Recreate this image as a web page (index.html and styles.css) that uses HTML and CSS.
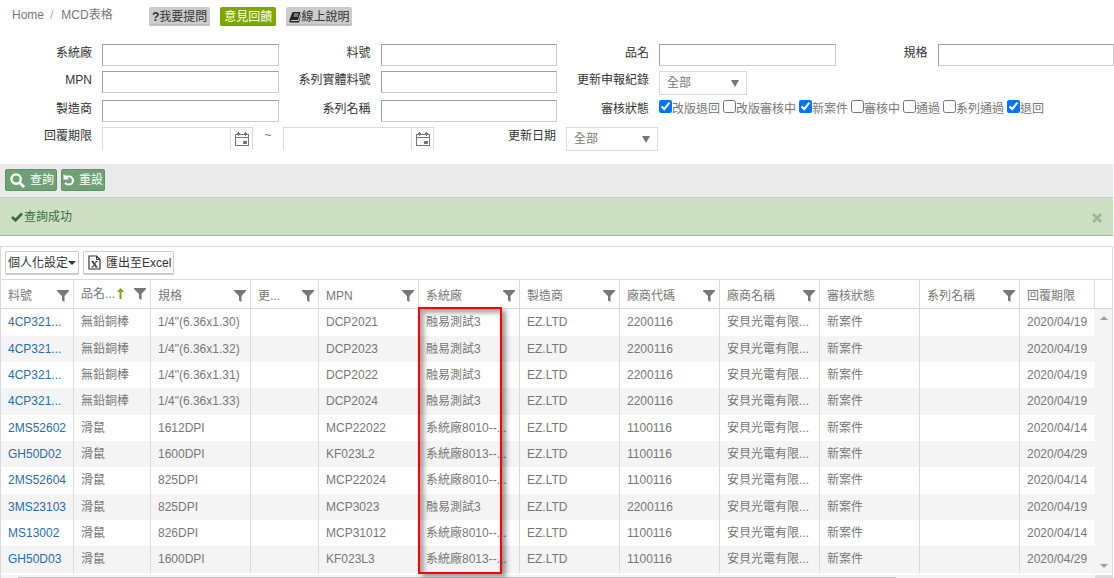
FILE: index.html
```html
<!DOCTYPE html>
<html lang="zh-Hant">
<head>
<meta charset="utf-8">
<title>MCD表格</title>
<link rel="stylesheet" href="styles.css">
</head>
<body>
<svg class="sprite" aria-hidden="true">
  <symbol id="funnel" viewBox="0 0 12 12"><path d="M0 0h12v1L7.500 6v6L5 10.500V6L0 1z"/></symbol>
  <symbol id="calendar" viewBox="0 0 14 14"><path d="M0 2h14v12H0zM1 6v7h12V6zM1 3v2h12V3z" fill-rule="evenodd"/><path d="M3 0h1v4H3zM10 0h1v4h-1zM2 1h3v1H2zM9 1h3v1H9zM8 9h4v3H8z"/></symbol>
  <symbol id="caret" viewBox="0 0 8 7"><path d="M0 0h8L4 7z"/></symbol>
</svg>

<header class="top">
  <nav class="crumbs"><a href="#">Home</a><span class="slash">/</span><span>MCD表格</span></nav>
  <button class="tag" type="button"><b>?</b>我要提問</button>
  <button class="tag tag-green" type="button">意見回饋</button>
  <button class="tag" type="button"><svg class="book" viewBox="0 0 12 12"><path d="M4 1h7.500L9 9H2.200c-.8 0-.8 1 0 1H9.500L12 3v1l-2 7.500H1.500C.3 11.500 0 10 .5 9L3 2z"/><path d="M5 3h4.500M4.500 5H9" stroke="#ccc"/></svg>線上說明</button>
</header>

<form class="search">
  <div class="fields">
    <div class="field"><label for="f1">系統廠</label><input class="text" id="f1" type="text"></div>
    <div class="field"><label for="f2">料號</label><input class="text" id="f2" type="text"></div>
    <div class="field"><label for="f3">品名</label><input class="text" id="f3" type="text"></div>
    <div class="field"><label for="f4">規格</label><input class="text" id="f4" type="text"></div>
    <div class="field"><label for="f5">MPN</label><input class="text" id="f5" type="text"></div>
    <div class="field"><label for="f6">系列實體料號</label><input class="text" id="f6" type="text"></div>
    <div class="field wide"><label for="f7">更新申報紀錄</label><span class="drop"><select id="f7"><option>全部</option></select><svg class="caret"><use href="#caret"/></svg></span></div>
    <div class="field"><label for="f8">製造商</label><input class="text" id="f8" type="text"></div>
    <div class="field"><label for="f9">系列名稱</label><input class="text" id="f9" type="text"></div>
    <div class="field wide" role="group" aria-labelledby="state"><span class="caption" id="state">審核狀態</span>
      <div class="checks">
        <label><input type="checkbox" checked>改版退回</label><label><input type="checkbox">改版審核中</label><label><input type="checkbox" checked>新案件</label><label><input type="checkbox">審核中</label><label><input type="checkbox">通過</label><label><input type="checkbox">系列通過</label><label><input type="checkbox" checked>退回</label>
      </div>
    </div>
  </div>
  <div class="dates">
    <label class="caption" for="d1">回覆期限</label>
    <span class="date"><input id="d1" type="text"><button type="button" aria-label="選擇開始日期"><svg><use href="#calendar"/></svg></button></span>
    <span class="tilde">~</span>
    <span class="date"><input type="text" aria-label="結束日期"><button type="button" aria-label="選擇結束日期"><svg><use href="#calendar"/></svg></button></span>
    <label class="caption updated" for="d3">更新日期</label>
    <span class="drop drop-date"><select id="d3"><option>全部</option></select><svg class="caret"><use href="#caret"/></svg></span>
  </div>
</form>

<div class="actions">
  <button class="act" type="button"><svg class="ico-search" viewBox="0 0 16 16"><circle cx="6.500" cy="6.500" r="5" fill="none" stroke="#fff" stroke-width="2.500"/><path d="M10 10l5 5" stroke="#fff" stroke-width="3"/></svg>查詢</button>
  <button class="act act-reset" type="button"><svg class="ico-undo" viewBox="0 0 12 12"><path d="M2.500 2.500H6a4 4 0 0 1 0 8Q3.500 10.500 2 9" fill="none" stroke="#fff" stroke-width="2.200"/><path d="M.5 0v5.500H6z" fill="#fff"/></svg>重設</button>
</div>

<div class="alert" role="status">
  <svg class="ico-check" viewBox="0 0 12 10"><path d="M1 5l3.500 3.200L11 1.500" fill="none" stroke="#3c6b3d" stroke-width="2.800"/></svg><span>查詢成功</span>
  <button class="close" type="button" aria-label="關閉"><svg viewBox="0 0 10 10"><path d="M1 1l8 8M9 1l-8 8" stroke="#a3b397" stroke-width="2.800"/></svg></button>
</div>

<section class="grid">
  <div class="tools">
    <button class="btn" type="button">個人化設定<svg class="mini" viewBox="0 0 8 4"><path d="M0 0h8L4 4z"/></svg></button>
    <button class="btn btn-excel" type="button"><svg class="ico-xls" viewBox="0 0 13 15"><path d="M1 1h7.500L12 4.500V14H1z" fill="none" stroke="#333" stroke-width="1.200"/><path d="M8.500 1v3.500H12" fill="none" stroke="#333"/><path d="M4.500 6.500l4 5.500" stroke="#333" stroke-width="1.600"/><path d="M8.500 6.500l-4 5.500M3.500 6.500h2M7.500 6.500h2M3.500 12h2M7.500 12h2" stroke="#333"/></svg>匯出至Excel</button>
  </div>
  <div class="view">
    <table>
      <colgroup><col class="c-no"><col class="c-name"><col class="c-std"><col class="c-chg"><col class="c-std"><col class="c-sys"><col class="c-std"><col class="c-std"><col class="c-std"><col class="c-std"><col class="c-std"><col></colgroup>
      <thead>
        <tr>
          <th><div class="head"><span>料號</span><svg><use href="#funnel"/></svg></div></th>
          <th><div class="head sorted"><span>品名...</span><svg class="sort" viewBox="0 0 7 11"><path d="M3.500 0L7 4H4.500v7h-2V4H0z"/></svg><svg><use href="#funnel"/></svg></div></th>
          <th><div class="head"><span>規格</span><svg><use href="#funnel"/></svg></div></th>
          <th><div class="head"><span>更...</span><svg><use href="#funnel"/></svg></div></th>
          <th><div class="head"><span>MPN</span><svg><use href="#funnel"/></svg></div></th>
          <th><div class="head"><span>系統廠</span><svg><use href="#funnel"/></svg></div></th>
          <th><div class="head"><span>製造商</span><svg><use href="#funnel"/></svg></div></th>
          <th><div class="head"><span>廠商代碼</span><svg><use href="#funnel"/></svg></div></th>
          <th><div class="head"><span>廠商名稱</span><svg><use href="#funnel"/></svg></div></th>
          <th><div class="head"><span>審核狀態</span></div></th>
          <th><div class="head"><span>系列名稱</span><svg><use href="#funnel"/></svg></div></th>
          <th><div class="head"><span>回覆期限</span></div></th>
        </tr>
      </thead>
      <tbody>
        <tr><td><a href="#">4CP321...</a></td><td>無鉛銅棒</td><td>1/4"(6.36x1.30)</td><td></td><td>DCP2021</td><td>融易測試3</td><td>EZ.LTD</td><td>2200116</td><td>安貝光電有限...</td><td>新案件</td><td></td><td>2020/04/19</td></tr>
        <tr><td><a href="#">4CP321...</a></td><td>無鉛銅棒</td><td>1/4"(6.36x1.32)</td><td></td><td>DCP2023</td><td>融易測試3</td><td>EZ.LTD</td><td>2200116</td><td>安貝光電有限...</td><td>新案件</td><td></td><td>2020/04/19</td></tr>
        <tr><td><a href="#">4CP321...</a></td><td>無鉛銅棒</td><td>1/4"(6.36x1.31)</td><td></td><td>DCP2022</td><td>融易測試3</td><td>EZ.LTD</td><td>2200116</td><td>安貝光電有限...</td><td>新案件</td><td></td><td>2020/04/19</td></tr>
        <tr><td><a href="#">4CP321...</a></td><td>無鉛銅棒</td><td>1/4"(6.36x1.33)</td><td></td><td>DCP2024</td><td>融易測試3</td><td>EZ.LTD</td><td>2200116</td><td>安貝光電有限...</td><td>新案件</td><td></td><td>2020/04/19</td></tr>
        <tr><td><a href="#">2MS52602</a></td><td>滑鼠</td><td>1612DPI</td><td></td><td>MCP22022</td><td>系統廠8010--...</td><td>EZ.LTD</td><td>1100116</td><td>安貝光電有限...</td><td>新案件</td><td></td><td>2020/04/14</td></tr>
        <tr><td><a href="#">GH50D02</a></td><td>滑鼠</td><td>1600DPI</td><td></td><td>KF023L2</td><td>系統廠8013--...</td><td>EZ.LTD</td><td>1100116</td><td>安貝光電有限...</td><td>新案件</td><td></td><td>2020/04/29</td></tr>
        <tr><td><a href="#">2MS52604</a></td><td>滑鼠</td><td>825DPI</td><td></td><td>MCP22024</td><td>系統廠8010--...</td><td>EZ.LTD</td><td>1100116</td><td>安貝光電有限...</td><td>新案件</td><td></td><td>2020/04/14</td></tr>
        <tr><td><a href="#">3MS23103</a></td><td>滑鼠</td><td>825DPI</td><td></td><td>MCP3023</td><td>融易測試3</td><td>EZ.LTD</td><td>2200116</td><td>安貝光電有限...</td><td>新案件</td><td></td><td>2020/04/19</td></tr>
        <tr><td><a href="#">MS13002</a></td><td>滑鼠</td><td>826DPI</td><td></td><td>MCP31012</td><td>系統廠8010--...</td><td>EZ.LTD</td><td>1100116</td><td>安貝光電有限...</td><td>新案件</td><td></td><td>2020/04/14</td></tr>
        <tr><td><a href="#">GH50D03</a></td><td>滑鼠</td><td>1600DPI</td><td></td><td>KF023L3</td><td>系統廠8013--...</td><td>EZ.LTD</td><td>1100116</td><td>安貝光電有限...</td><td>新案件</td><td></td><td>2020/04/29</td></tr>
      </tbody>
    </table>
    <div class="side">
      <div class="side-head"></div>
      <div class="side-bar"><svg viewBox="0 0 8 4"><path d="M0 4L4 0l4 4z"/></svg><svg viewBox="0 0 8 4"><path d="M0 0h8L4 4z"/></svg></div>
    </div>
    <div class="marker"></div>
  </div>
  <div class="hbar"><div class="thumb"></div><div class="corner"></div></div>
</section>
</body>
</html>
```
FILE: styles.css
```css
* { box-sizing: border-box; }
body {
  margin: 0;
  overflow: hidden;
  background: #fff;
  color: #777;
  font: 12px/18px "Liberation Sans", Arial, "Noto Sans CJK TC", sans-serif;
}
button, input, select { margin: 0; font: inherit; color: inherit; }
button { display: flex; align-items: center; padding: 0; white-space: nowrap; cursor: pointer; }
a { text-decoration: none; }
svg { flex: none; fill: #777; }
.sprite { position: absolute; width: 0; height: 0; }

/* breadcrumb and help links */
.top { display: flex; gap: 10px; padding: 7px 12px 0; }
.crumbs { display: flex; width: 127px; line-height: 16px; }
.crumbs a { color: #777; }
.slash { padding: 0 8px 0 6px; color: #aaa; }
.tag { height: 19px; padding: 0 3px; border: 0; border-radius: 2px; background: #ccc; box-shadow: inset 0 -2px #bdbdbd; color: #333; }
.tag-green { padding: 0 4px; background: #7ea700; box-shadow: inset 0 -1px #6f9b00; color: #fff; }
.tag .book { width: 12px; height: 12px; fill: #222; }

/* search form */
.search { padding: 18px 0 13px; }
.fields { display: grid; grid-template-columns: repeat(4, 1fr); row-gap: 5px; }
.field { display: grid; grid-template-columns: 92px 1fr; column-gap: 10px; align-items: start; }
.field > label, .caption { color: #333; text-align: right; white-space: nowrap; }
.wide { grid-column: span 2; }
.text { width: 100%; height: 22px; border: 1px solid #ccc; border-top-color: #a0a0a0; border-left-color: #a0a0a0; background: #fff; }
.drop { display: grid; width: 88px; align-items: center; }
.drop select { grid-area: 1 / 1; height: 24px; padding: 0 7px; border: 1px solid #dadada; border-radius: 0; background: #fff; appearance: none; }
.drop .caret { grid-area: 1 / 1; justify-self: end; width: 8px; height: 7px; margin-right: 8px; pointer-events: none; }
.checks { display: flex; gap: 3px; white-space: nowrap; }
.checks label { display: flex; align-items: flex-start; }
.checks input { width: 13px; height: 13px; }
.dates { display: flex; margin-top: 5px; align-items: flex-start; }
.dates .caption { width: 92px; margin-right: 10px; }
.dates .updated { margin-left: 30px; }
.date { display: flex; width: 151px; height: 23px; border: 1px solid #dadada; border-bottom: 0; }
.date input { flex: 1; min-width: 0; border: 0; }
.date button { width: 22px; justify-content: center; border: 0; border-left: 1px solid #dadada; background: #fff; }
.date svg { width: 14px; height: 14px; }
.tilde { width: 30px; text-align: center; line-height: 16px; }
.drop-date { width: 92px; }

/* action bar */
.actions { display: flex; gap: 4px; margin-right: 1px; padding: 5px 5px 6px; border-bottom: 1px solid #ccc; background: #eaeaea; }
.act { height: 22px; gap: 5px; padding: 0 2px 0 4px; border: 1px solid #609266; border-radius: 2px; background: #70a075; color: #fff; }
.act-reset { gap: 4px; padding: 0 1px; }
.ico-search { width: 15px; height: 15px; }
.ico-undo { width: 12px; height: 12px; }
.alert { display: flex; align-items: center; height: 38px; margin-right: 1px; padding: 0 11px; border-bottom: 1px solid #8cc295; background: #cde0c4; color: #3c6b3d; }
.ico-check { width: 12px; height: 10px; margin-right: 1px; }
.close { margin: 3px 0 0 auto; border: 0; background: none; }
.close svg { width: 10px; height: 10px; }

/* data grid */
.grid { margin: 10px 1px 0 0; border: 1px solid #dadada; border-bottom: 0; }
.tools { display: flex; gap: 4px; padding: 4px; border-bottom: 1px solid #dadada; }
.btn { height: 24px; padding: 0 2px; border: 1px solid #ccc; border-bottom-width: 2px; border-radius: 2px; background: #fff; color: #333; }
.btn-excel { gap: 5px; padding: 0 2px 0 4px; }
.mini { width: 8px; height: 4px; fill: #333; }
.ico-xls { width: 13px; height: 15px; }
.view { position: relative; display: flex; }
table { flex: 1; width: 0; border-collapse: separate; border-spacing: 0; table-layout: fixed; }
.c-no { width: 72px; }
.c-name { width: 77px; }
.c-std { width: 100px; }
.c-chg { width: 68px; }
.c-sys { width: 101px; }
th, td { overflow: hidden; padding: 0 0 0 7px; border-left: 1px solid #dadada; text-align: left; font-weight: normal; white-space: nowrap; }
th:first-child, td:first-child { border-left: 0; }
th { height: 29px; border-bottom: 1px solid #dadada; }
th:last-child { border-right: 1px solid #dadada; }
.head { display: flex; align-items: center; justify-content: space-between; padding: 4px 4px 0 0; }
.head svg { width: 12px; height: 12px; }
.head.sorted { padding: 0 4px 1px 0; }
.head .sort { width: 7px; height: 11px; margin-right: 9px; fill: #7ea700; }
td { height: 26px; padding-bottom: 1px; }
tbody tr:nth-child(3n+1) td { height: 27px; }
tbody tr:nth-child(even) { background: #f4f4f4; }
td a { color: #2a6cab; }
.side { display: flex; flex-direction: column; width: 17px; }
.side-head { height: 29px; border-bottom: 1px solid #dadada; }
.side-bar { display: flex; flex: 1; flex-direction: column; align-items: center; justify-content: space-between; padding: 7px 0 5px; background: #f4f4f4; }
.side-bar svg { width: 8px; height: 4px; fill: #a0a0a0; }
.marker { position: absolute; top: 27px; bottom: -1px; left: 417px; width: 84px; border: 2px solid #f00; box-shadow: 4px 3px 5px rgba(0, 0, 0, .4), inset 4px 4px 5px rgba(0, 0, 0, .35); pointer-events: none; }
.hbar { display: flex; height: 3px; margin-top: 2px; background: #f4f4f4; }
.thumb { width: 79%; margin: 2px auto 0 17px; background: #c1c1c1; }
.corner { width: 17px; background: #dcdcdc; }
```
